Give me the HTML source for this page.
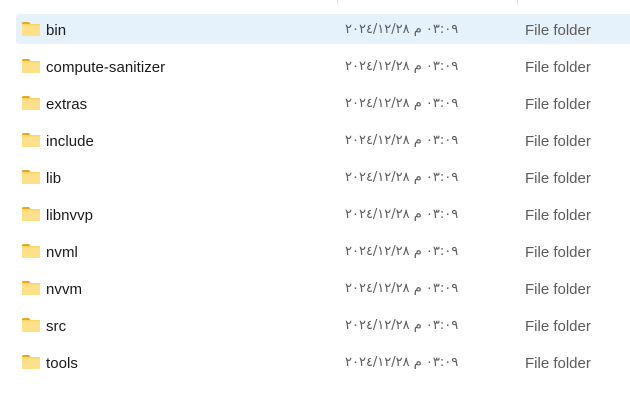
<!DOCTYPE html>
<html><head><meta charset="utf-8"><style>
body{margin:0;width:630px;height:402px;background:#fff;position:relative;overflow:hidden;font-family:"Liberation Sans","DejaVu Sans",sans-serif;}
.div{position:absolute;top:0;width:1px;height:5px;background:#e5e5e5}
.row{position:absolute;left:16px;width:614px;height:30px}
.row.sel{background:#e5f1fb;border-radius:3px 0 0 3px}
.ic{position:absolute;left:6px;top:8px;width:18px;height:14px}
.name{position:absolute;left:30px;top:8px;font-size:15px;color:#1a1a1a;letter-spacing:0.05px}
.date{position:absolute;left:329px;top:8px;font-size:13px;color:#5c5c5c;direction:ltr;unicode-bidi:bidi-override;font-family:"DejaVu Sans",sans-serif;letter-spacing:-0.3px}
.type{position:absolute;left:509px;top:8px;font-size:15px;color:#5c5c5c}
</style></head><body>
<div class="div" style="left:337px"></div>
<div class="div" style="left:517px"></div>
<div class="row sel" style="top:14px"><svg class="ic" viewBox="0 0 18 14"><path d="M0 1.5Q0 0 1.5 0H7l1.5 2H0z" fill="#e8a623"/><rect x="0" y="2" width="18" height="12" rx="1" fill="#fcd462"/><rect x="0" y="3.5" width="18" height="10.5" rx="1" fill="#ffe08a"/></svg><span class="name">bin</span><span class="date">٢٠٢٤/١٢/٢٨ م ٠٣:٠٩</span><span class="type">File folder</span></div>
<div class="row" style="top:51px"><svg class="ic" viewBox="0 0 18 14"><path d="M0 1.5Q0 0 1.5 0H7l1.5 2H0z" fill="#e8a623"/><rect x="0" y="2" width="18" height="12" rx="1" fill="#fcd462"/><rect x="0" y="3.5" width="18" height="10.5" rx="1" fill="#ffe08a"/></svg><span class="name">compute-sanitizer</span><span class="date">٢٠٢٤/١٢/٢٨ م ٠٣:٠٩</span><span class="type">File folder</span></div>
<div class="row" style="top:88px"><svg class="ic" viewBox="0 0 18 14"><path d="M0 1.5Q0 0 1.5 0H7l1.5 2H0z" fill="#e8a623"/><rect x="0" y="2" width="18" height="12" rx="1" fill="#fcd462"/><rect x="0" y="3.5" width="18" height="10.5" rx="1" fill="#ffe08a"/></svg><span class="name">extras</span><span class="date">٢٠٢٤/١٢/٢٨ م ٠٣:٠٩</span><span class="type">File folder</span></div>
<div class="row" style="top:125px"><svg class="ic" viewBox="0 0 18 14"><path d="M0 1.5Q0 0 1.5 0H7l1.5 2H0z" fill="#e8a623"/><rect x="0" y="2" width="18" height="12" rx="1" fill="#fcd462"/><rect x="0" y="3.5" width="18" height="10.5" rx="1" fill="#ffe08a"/></svg><span class="name">include</span><span class="date">٢٠٢٤/١٢/٢٨ م ٠٣:٠٩</span><span class="type">File folder</span></div>
<div class="row" style="top:162px"><svg class="ic" viewBox="0 0 18 14"><path d="M0 1.5Q0 0 1.5 0H7l1.5 2H0z" fill="#e8a623"/><rect x="0" y="2" width="18" height="12" rx="1" fill="#fcd462"/><rect x="0" y="3.5" width="18" height="10.5" rx="1" fill="#ffe08a"/></svg><span class="name">lib</span><span class="date">٢٠٢٤/١٢/٢٨ م ٠٣:٠٩</span><span class="type">File folder</span></div>
<div class="row" style="top:199px"><svg class="ic" viewBox="0 0 18 14"><path d="M0 1.5Q0 0 1.5 0H7l1.5 2H0z" fill="#e8a623"/><rect x="0" y="2" width="18" height="12" rx="1" fill="#fcd462"/><rect x="0" y="3.5" width="18" height="10.5" rx="1" fill="#ffe08a"/></svg><span class="name">libnvvp</span><span class="date">٢٠٢٤/١٢/٢٨ م ٠٣:٠٩</span><span class="type">File folder</span></div>
<div class="row" style="top:236px"><svg class="ic" viewBox="0 0 18 14"><path d="M0 1.5Q0 0 1.5 0H7l1.5 2H0z" fill="#e8a623"/><rect x="0" y="2" width="18" height="12" rx="1" fill="#fcd462"/><rect x="0" y="3.5" width="18" height="10.5" rx="1" fill="#ffe08a"/></svg><span class="name">nvml</span><span class="date">٢٠٢٤/١٢/٢٨ م ٠٣:٠٩</span><span class="type">File folder</span></div>
<div class="row" style="top:273px"><svg class="ic" viewBox="0 0 18 14"><path d="M0 1.5Q0 0 1.5 0H7l1.5 2H0z" fill="#e8a623"/><rect x="0" y="2" width="18" height="12" rx="1" fill="#fcd462"/><rect x="0" y="3.5" width="18" height="10.5" rx="1" fill="#ffe08a"/></svg><span class="name">nvvm</span><span class="date">٢٠٢٤/١٢/٢٨ م ٠٣:٠٩</span><span class="type">File folder</span></div>
<div class="row" style="top:310px"><svg class="ic" viewBox="0 0 18 14"><path d="M0 1.5Q0 0 1.5 0H7l1.5 2H0z" fill="#e8a623"/><rect x="0" y="2" width="18" height="12" rx="1" fill="#fcd462"/><rect x="0" y="3.5" width="18" height="10.5" rx="1" fill="#ffe08a"/></svg><span class="name">src</span><span class="date">٢٠٢٤/١٢/٢٨ م ٠٣:٠٩</span><span class="type">File folder</span></div>
<div class="row" style="top:347px"><svg class="ic" viewBox="0 0 18 14"><path d="M0 1.5Q0 0 1.5 0H7l1.5 2H0z" fill="#e8a623"/><rect x="0" y="2" width="18" height="12" rx="1" fill="#fcd462"/><rect x="0" y="3.5" width="18" height="10.5" rx="1" fill="#ffe08a"/></svg><span class="name">tools</span><span class="date">٢٠٢٤/١٢/٢٨ م ٠٣:٠٩</span><span class="type">File folder</span></div>
</body></html>
